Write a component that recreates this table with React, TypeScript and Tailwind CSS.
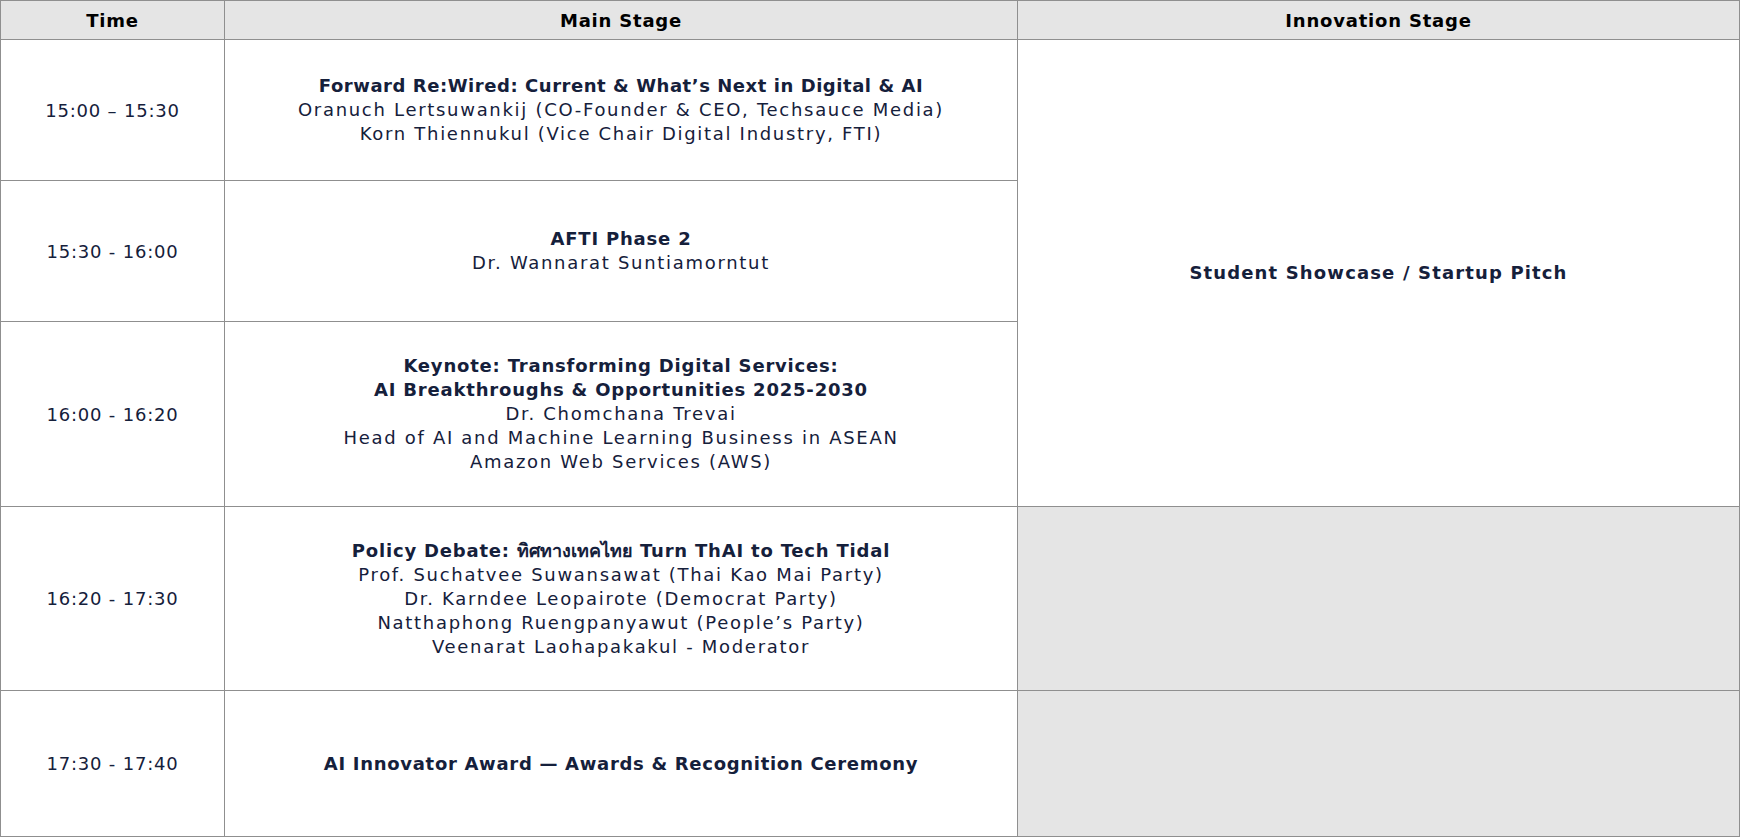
import React from "react";

const font = { fontFamily: '"DejaVu Sans", "Noto Sans", sans-serif' };

function Title({ children }: { children: React.ReactNode }) {
  return <div className="font-bold text-[18px] leading-[24px] tracking-[0.8px]">{children}</div>;
}
function Line({ children }: { children: React.ReactNode }) {
  return <div className="text-[18px] leading-[24px] tracking-[1.7px]">{children}</div>;
}

function Time({ children }: { children: React.ReactNode }) {
  return (
    <div className="bg-white flex items-center justify-center text-[18px] tracking-[0.8px] text-[#15203b]">
      {children}
    </div>
  );
}

function Main({ children }: { children: React.ReactNode }) {
  return (
    <div className="bg-white flex flex-col items-center justify-center text-center text-[#15203b]">
      {children}
    </div>
  );
}

export default function App() {
  return (
    <div style={font} className="w-[1740px] h-[837px] bg-white">
      <div className="grid grid-cols-[223px_792px_721px] grid-rows-[38px_140px_140px_184px_183px_145px] gap-px p-px bg-[#8f8f8f]">
        <div className="bg-[#e5e5e5] flex items-center justify-center font-bold text-[18px] tracking-[0.8px] text-black">Time</div>
        <div className="bg-[#e5e5e5] flex items-center justify-center font-bold text-[18px] tracking-[0.8px] text-black">Main Stage</div>
        <div className="bg-[#e5e5e5] flex items-center justify-center font-bold text-[18px] tracking-[0.8px] text-black">Innovation Stage</div>

        <Time>15:00 – 15:30</Time>
        <Main>
          <Title>
            <span className="tracking-[0.55px]">Forward Re:Wired: Current &amp; What’s Next in Digital &amp; AI</span>
          </Title>
          <Line>Oranuch Lertsuwankij (CO-Founder &amp; CEO, Techsauce Media)</Line>
          <Line>Korn Thiennukul (Vice Chair Digital Industry, FTI)</Line>
        </Main>
        <div className="row-span-3 bg-white flex items-center justify-center text-[#15203b]">
          <Title>
            <span className="tracking-[1.15px]">Student Showcase / Startup Pitch</span>
          </Title>
        </div>

        <Time>15:30 - 16:00</Time>
        <Main>
          <Title>AFTI Phase 2</Title>
          <Line>Dr. Wannarat Suntiamorntut</Line>
        </Main>

        <Time>16:00 - 16:20</Time>
        <Main>
          <Title>Keynote: Transforming Digital Services:</Title>
          <Title>AI Breakthroughs &amp; Opportunities 2025-2030</Title>
          <Line>Dr. Chomchana Trevai</Line>
          <Line>Head of AI and Machine Learning Business in ASEAN</Line>
          <Line>Amazon Web Services (AWS)</Line>
        </Main>

        <Time>16:20 - 17:30</Time>
        <Main>
          <Title>
            Policy Debate: <span className="tracking-normal">ทิศทางเทคไทย</span> Turn ThAI to Tech Tidal
          </Title>
          <Line>Prof. Suchatvee Suwansawat (Thai Kao Mai Party)</Line>
          <Line>Dr. Karndee Leopairote (Democrat Party)</Line>
          <Line>Natthaphong Ruengpanyawut (People’s Party)</Line>
          <Line>Veenarat Laohapakakul - Moderator</Line>
        </Main>
        <div className="bg-[#e5e5e5]" />

        <Time>17:30 - 17:40</Time>
        <Main>
          <Title>
            <span className="tracking-[0.7px]">AI Innovator Award — Awards &amp; Recognition Ceremony</span>
          </Title>
        </Main>
        <div className="bg-[#e5e5e5]" />
      </div>
    </div>
  );
}
